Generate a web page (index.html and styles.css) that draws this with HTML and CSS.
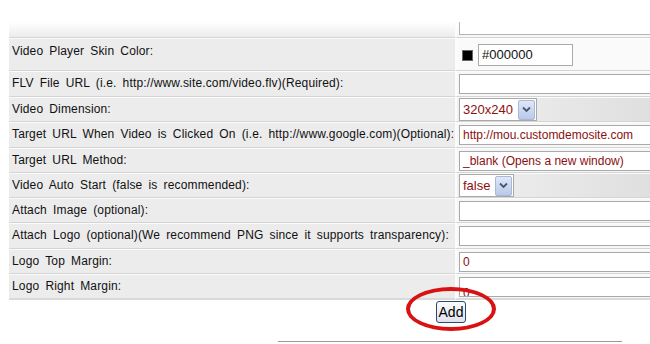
FILE: index.html
```html
<!DOCTYPE html>
<html lang="en">
<head>
  <meta charset="UTF-8">
  <title>Add Video</title>
  <link rel="stylesheet" href="styles.css">
</head>
<body>
  <div class="page">
    <table class="form">
      <tr class="top">
        <td class="label"></td>
        <td class="value"><div class="stub"></div></td>
      </tr>
      <tr class="tall">
        <td class="label">Video Player Skin Color:</td>
        <td class="value light"><span class="swatch"></span><span class="field color">#000000</span></td>
      </tr>
      <tr class="x">
        <td class="label">FLV File URL (i.e. http://www.site.com/video.flv)(Required):</td>
        <td class="value"><span class="field wide"></span></td>
      </tr>
      <tr>
        <td class="label">Video Dimension:</td>
        <td class="value shade"><span class="pick">320x240<span class="arrow"><svg width="9" height="7" viewBox="0 0 9 7"><path d="M1 1.5 L4.5 5 L8 1.5" fill="none" stroke="#4a5670" stroke-width="1.8"/></svg></span></span></td>
      </tr>
      <tr class="x">
        <td class="label">Target URL When Video is Clicked On (i.e. http://www.google.com)(Optional):</td>
        <td class="value"><span class="field wide">http://mou.customdemosite.com</span></td>
      </tr>
      <tr>
        <td class="label">Target URL Method:</td>
        <td class="value"><span class="field wide">_blank (Opens a new window)</span></td>
      </tr>
      <tr>
        <td class="label">Video Auto Start (false is recommended):</td>
        <td class="value shade"><span class="pick">false<span class="arrow"><svg width="9" height="7" viewBox="0 0 9 7"><path d="M1 1.5 L4.5 5 L8 1.5" fill="none" stroke="#4a5670" stroke-width="1.8"/></svg></span></span></td>
      </tr>
      <tr>
        <td class="label">Attach Image (optional):</td>
        <td class="value"><span class="field wide"></span></td>
      </tr>
      <tr class="x">
        <td class="label">Attach Logo (optional)(We recommend PNG since it supports transparency):</td>
        <td class="value"><span class="field wide"></span></td>
      </tr>
      <tr>
        <td class="label">Logo Top Margin:</td>
        <td class="value"><span class="field wide">0</span></td>
      </tr>
      <tr class="last">
        <td class="label">Logo Right Margin:</td>
        <td class="value"><span class="field wide cut">0</span></td>
      </tr>
    </table>
    <div class="actions">
      <button class="add">Add</button>
      <span class="ring"></span>
    </div>
    <div class="rule"></div>
  </div>
</body>
</html>
```

FILE: styles.css
```css
body {
  margin: 0;
  background: #fff;
  overflow: hidden;
  font-family: "Liberation Sans", Arial, sans-serif;
  font-size: 12px;
  color: #111;
}
.page {
  width: 650px;
  height: 344px;
  padding: 22px 0 0 9px;
  box-sizing: border-box;
  overflow: hidden;
}
.form {
  border-collapse: separate;
  border-spacing: 0;
  width: 680px;
}
.form td {
  padding: 0;
  vertical-align: top;
  border-bottom: 1px solid #d4d4d4;
  border-top: 1px solid #fbfbfb;
  height: 23px;
}
.form .x td {
  height: 24px;
}
.label {
  width: 446px;
  background: #ececec;
  padding: 2px 0 0 3px !important;
  box-sizing: border-box;
  line-height: 18px;
  letter-spacing: 0.15px;
  word-spacing: 2.6px;
  white-space: nowrap;
}
.value {
  background: #f7f7f7;
  border-left: 2px solid #fcfcfc;
  padding-left: 2px !important;
}
.value.light {
  background: #fafafa;
}
.value.shade {
  background: linear-gradient(to right, #f0f0f0, #dcdcdc);
}
.form .top td {
  height: 15px;
  border-top: none;
  background: linear-gradient(to bottom, #fff, #ececec);
}
.form .top .value {
  background: linear-gradient(to bottom, #fff, #f6f6f6);
}
.stub {
  height: 12px;
  border: 1px solid #b4b4b4;
  border-top: none;
  background: #fff;
}
.form .tall td {
  height: 31px;
}
.form .tall .label {
  padding-top: 3px !important;
}
.field {
  display: inline-block;
  box-sizing: border-box;
  height: 20px;
  margin-top: 2px;
  border: 1px solid #a9a9a9;
  background: #fff;
  color: #8b1010;
  font-size: 12px;
  line-height: 18px;
  padding-left: 3px;
  white-space: nowrap;
  overflow: hidden;
  vertical-align: top;
}
.wide {
  width: 210px;
}
.field.cut {
  line-height: 30px;
}
.color {
  width: 95px;
  height: 22px;
  margin-top: 5px;
  color: #111;
  font-size: 13px;
  line-height: 20px;
  margin-left: 5px;
}
.swatch {
  display: inline-block;
  width: 11px;
  height: 11px;
  background: #000;
  border: 1px solid #666;
  box-sizing: border-box;
  margin: 11px 0 0 3px;
  vertical-align: top;
}
.pick {
  display: inline-flex;
  align-items: center;
  box-sizing: border-box;
  height: 23px;
  border: 1px solid #a9a9a9;
  background: #fff;
  color: #8b1010;
  font-size: 13px;
  padding-left: 3px;
  gap: 5px;
  vertical-align: top;
}
.arrow {
  display: flex;
  align-items: center;
  justify-content: center;
  width: 15px;
  height: 18px;
  margin-right: 1px;
  border: 1px solid #a8b8d8;
  border-radius: 2px;
  background: linear-gradient(to bottom, #dfe7f7, #b9c9e8);
}
.form .last td {
  border-bottom: 2px solid #dadada;
}
.actions {
  position: relative;
  padding-left: 427px;
  padding-top: 1px;
}
.add {
  font-family: "Liberation Sans", Arial, sans-serif;
  font-size: 14px;
  height: 22px;
  width: 30px;
  padding: 0;
  color: #000;
  border: 1px solid #2d4a6e;
  border-radius: 3px;
  background: linear-gradient(to bottom, #fafbfd, #dfe3ec);
}
.ring {
  position: absolute;
  left: 397px;
  top: -13px;
  width: 82px;
  height: 36px;
  border: 4px solid #d81212;
  border-radius: 50%;
}
.rule {
  margin: 18px 0 0 269px;
  width: 344px;
  border-top: 1px solid #9a9a9a;
}
```
